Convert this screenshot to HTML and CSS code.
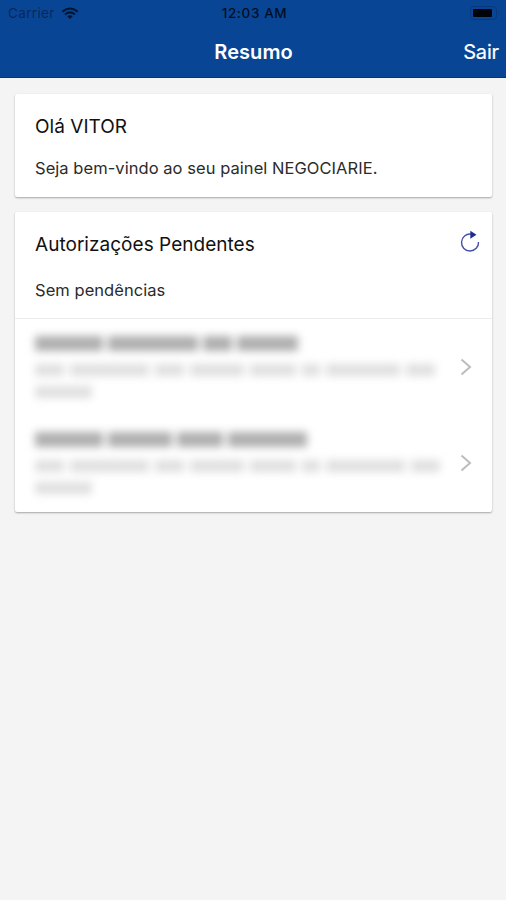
FILE: index.html
```html
<!DOCTYPE html>
<html lang="pt-BR">
<head>
<meta charset="utf-8">
<title>Resumo</title>
<link rel="stylesheet" href="styles.css">
</head>
<body>
<header class="header">
  <div class="status">
    <div class="carrier"><span>Carrier</span>
      <svg width="18" height="13" viewBox="0 0 18 13" fill="none" stroke="#03152f" stroke-width="2"><path d="M1.300 4.700Q9-1.700 16.700 4.700M4 7.500Q9 3.300 14 7.500"/><path d="M6.300 9.300Q9 7 11.700 9.300L9 12z" fill="#03152f" stroke="none"/></svg>
    </div>
    <span class="time">12:03 AM</span>
    <svg class="battery" width="32" height="14" viewBox="0 0 32 14"><rect x="1.500" y=".5" width="26" height="13" rx="3.500" fill="none" stroke="#07387c"/><rect x="4" y="3" width="19" height="8" rx="1" fill="#00040a"/><path d="M29.500 5Q31.500 7 29.500 9z" fill="#07387c"/></svg>
  </div>
  <div class="nav">
    <h1 class="title">Resumo</h1>
    <a class="exit">Sair</a>
  </div>
</header>
<main class="content">
  <section class="card welcome">
    <h2 class="heading hello">Olá VITOR</h2>
    <p class="text greeting">Seja bem-vindo ao seu painel NEGOCIARIE.</p>
  </section>
  <section class="card pending">
    <div class="summary">
      <div class="heading-row">
        <h2 class="heading">Autorizações Pendentes</h2>
        <svg class="refresh" width="20" height="22" viewBox="0 0 20 22"><path d="M11 4.100A8.500 8.500 0 1 0 18.500 12" fill="none" stroke="#4450a4" stroke-width="1.400"/><path d="M10.300.700L16.500 4.700L10.300 8.700z" fill="#1d2d91"/></svg>
      </div>
      <p class="text none">Sem pendências</p>
    </div>
    <div class="item">
      <div class="masked">
        <div class="line name"><i class="w67"></i><i class="w90"></i><i class="w28"></i><i class="w58"></i></div>
        <div class="line detail"><i class="w28"></i><i class="w76"></i><i class="w28"></i><i class="w52"></i><i class="w46"></i><i class="w18"></i><i class="w72"></i><i class="w28"></i></div>
        <div class="line detail last"><i class="w54"></i></div>
      </div>
      <svg class="chevron" width="12" height="18" viewBox="0 0 12 18"><path d="M1.500 1.500L10 9L1.500 16.500" fill="none" stroke="#bdbdbd" stroke-width="2"/></svg>
    </div>
    <div class="item">
      <div class="masked">
        <div class="line name"><i class="w67"></i><i class="w62"></i><i class="w46"></i><i class="w76"></i></div>
        <div class="line detail"><i class="w28"></i><i class="w76"></i><i class="w28"></i><i class="w52"></i><i class="w46"></i><i class="w18"></i><i class="w76"></i><i class="w28"></i></div>
        <div class="line detail last"><i class="w54"></i></div>
      </div>
      <svg class="chevron" width="12" height="18" viewBox="0 0 12 18"><path d="M1.500 1.500L10 9L1.500 16.500" fill="none" stroke="#bdbdbd" stroke-width="2"/></svg>
    </div>
  </section>
</main>
</body>
</html>
```
FILE: styles.css
```css
* { box-sizing: border-box; }
body { margin: 0; min-height: 900px; background: #f4f4f4; font-family: Inter, "Liberation Sans", sans-serif; color: #111; }
h1, h2, p { margin: 0; font-weight: 400; }
svg { display: block; flex: none; }
.header { height: 78px; background: #084695; border-bottom: 1px solid #063280; }
.status { display: grid; grid-template-columns: 1fr auto 1fr; height: 26px; padding: 0 5px 0 8px; align-items: center; font-size: 13.5px; color: #08285c; }
.carrier { display: flex; align-items: center; gap: 6px; letter-spacing: .35px; }
.time { color: #020e24; font-weight: 500; letter-spacing: .6px; }
.battery { justify-self: end; }
.nav { display: grid; grid-template-columns: 1fr auto 1fr; align-items: center; height: 51px; padding: 0 7px; color: #fff; }
.title { grid-column: 2; padding-left: 1px; font-size: 20px; font-weight: 600; letter-spacing: .05px; }
.exit { justify-self: end; font-size: 20px; letter-spacing: -.15px; -webkit-text-stroke: .2px #fff; }
.content { display: flex; flex-direction: column; gap: 15px; padding: 16px 14px 0 15px; }
.card { background: #fff; border-radius: 2px; box-shadow: 0 1px 2px rgba(0,0,0,.32); }
.welcome { height: 103px; padding: 20px; }
.heading { height: 24px; font-size: 19px; line-height: 26px; letter-spacing: .03px; }
.text { font-size: 16.5px; line-height: 22px; letter-spacing: .05px; color: #2b2b2b; }
.greeting { margin-top: 19px; }
.pending { height: 300px; }
.summary { height: 107px; padding: 20px 12px 0 20px; border-bottom: 1px solid #ececec; }
.heading-row { display: flex; justify-content: space-between; height: 24px; }
.refresh { margin-top: -2px; }
.none { margin-top: 23px; }
.item { display: flex; justify-content: space-between; align-items: center; height: 96px; padding: 0 20px; }
.masked { display: flex; flex-direction: column; padding-top: 1px; filter: blur(4.5px); }
.line { display: flex; gap: 6px; height: 12px; }
.line i { background: #dfdfdf; height: 100%; }
.name { gap: 5px; height: 15px; margin-bottom: 13px; }
.name i { background: #aeaeae; }
.last { margin-top: 10px; margin-bottom: 2px; }
.w18 { width: 18px; }
.w28 { width: 29px; }
.w46 { width: 46px; }
.w52 { width: 54px; }
.w54 { width: 57px; }
.w58 { width: 61px; }
.w62 { width: 64px; }
.w67 { width: 68px; }
.w72 { width: 74px; }
.w76 { width: 79px; }
.w90 { width: 90px; }
```
